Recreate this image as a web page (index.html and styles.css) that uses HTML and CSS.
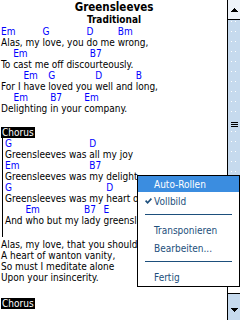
FILE: index.html
```html
<!DOCTYPE html>
<html lang="de">
<head>
<meta charset="utf-8">
<title>Greensleeves</title>
<link rel="stylesheet" href="styles.css">
</head>
<body>
<div class="screen">
  <main class="content">
    <header class="head">
      <h1 class="title">Greensleeves</h1>
      <p class="sub">Traditional</p>
    </header>

    <section class="verse">
      <div class="l"><span class="s"><i>Em</i>Alas, my </span><span class="s"><i>G</i>love, you </span><span class="s"><i>D</i>do me </span><span class="s"><i>Bm</i>wrong,</span></div>
      <div class="l"><span class="s"><i></i>To </span><span class="s"><i>Em</i>cast me off disco</span><span class="s"><i>B7</i>urteously.</span></div>
      <div class="l"><span class="s"><i></i>For I </span><span class="s"><i>Em</i>have </span><span class="s"><i>G</i>loved you </span><span class="s"><i>D</i>well and </span><span class="s"><i>B</i>long,</span></div>
      <div class="l"><span class="s"><i></i>De</span><span class="s"><i>Em</i>lighting </span><span class="s"><i>B7</i>in your </span><span class="s"><i>Em</i>company.</span></div>
    </section>

    <section class="chorus gap">
      <div class="label">Chorus</div>
      <div class="cbody">
        <div class="l"><span class="s"><i>G</i>Greensleeves was </span><span class="s"><i>D</i>all my joy</span></div>
        <div class="l"><span class="s"><i>Em</i>Greensleeves was </span><span class="s"><i>B7</i>my delight,</span></div>
        <div class="l"><span class="s"><i>G</i>Greensleeves was my </span><span class="s"><i>D</i>heart of gold,</span></div>
        <div class="l"><span class="s"><i></i>And </span><span class="s"><i>Em</i>who but my l</span><span class="s"><i>B7</i>ady </span><span class="s"><i>E</i>greensleeves.</span></div>
        <div class="t"></div>
      </div>
    </section>

    <section class="verse gap2">
      <div class="t">Alas, my love, that you should own</div>
      <div class="t">A heart of wanton vanity,</div>
      <div class="t">So must I meditate alone</div>
      <div class="t">Upon your insincerity.</div>
    </section>

    <section class="chorus gap3">
      <div class="label">Chorus</div>
    </section>
  </main>

  <aside class="sb">
    <div class="up"><svg width="7" height="4" viewBox="0 0 7 4"><polygon points="0,4 7,4 3.5,0" fill="#000"/></svg></div>
    <div class="thumb">
      <div class="dots"></div>
      <div class="grip"><span></span><span></span><span></span></div>
    </div>
    <div class="track"></div>
    <div class="down"><svg width="7" height="4" viewBox="0 0 7 4"><polygon points="0,0 7,0 3.5,4" fill="#000"/></svg></div>
  </aside>

  <nav class="menu">
    <div class="mi on"><span class="ck"></span>Auto-Rollen</div>
    <div class="mi"><span class="ck"><svg width="7" height="6" viewBox="0 0 7 6"><path d="M0.6 2.6 L2.6 4.8 L6.4 0.6" fill="none" stroke="#1d4f7c" stroke-width="1.6"/></svg></span>Vollbild</div>
    <div class="sep"></div>
    <div class="mi"><span class="ck"></span>Transponieren</div>
    <div class="mi"><span class="ck"></span>Bearbeiten...</div>
    <div class="sep"></div>
    <div class="mi"><span class="ck"></span>Fertig</div>
  </nav>
</div>
</body>
</html>
```

FILE: styles.css
```css
* { margin: 0; padding: 0; box-sizing: border-box; }

html, body { width: 240px; height: 320px; overflow: hidden; background: #fff; }

body {
  font-family: "DejaVu Sans Condensed", "DejaVu Sans", sans-serif;
  font-stretch: condensed;
  font-size: 10px;
  line-height: 11px;
  color: #000;
}

.screen {
  position: relative;
  display: flex;
  width: 240px;
  height: 320px;
  overflow: hidden;
}

.content {
  flex: none;
  width: 227px;
  height: 320px;
  overflow: hidden;
  padding-left: 1px;
  white-space: nowrap;
}

.head { height: 26px; }

.title {
  font-size: 11.5px;
  font-weight: bold;
  line-height: 14px;
  text-align: center;
}

.sub {
  font-size: 10px;
  font-weight: bold;
  line-height: 12px;
  text-align: center;
}

.gap { margin-top: 13px; }
.gap2 { margin-top: 2px; }
.gap3 { margin-top: 15px; }

.l { display: flex; height: 22px; }
.s { display: flex; flex-direction: column; white-space: pre; }
.s i {
  display: block;
  height: 11px;
  font-style: normal;
  color: #0000ff;
}
.t { height: 11px; white-space: pre; }

.label {
  width: fit-content;
  height: 11px;
  padding: 0 1px;
  background: #000;
  color: #fff;
}

.cbody {
  margin-left: 1px;
  border-left: 1px solid #000;
  padding-left: 2px;
}

/* scrollbar */
.sb {
  flex: none;
  width: 13px;
  height: 320px;
  border-left: 1px solid #000;
  display: flex;
  flex-direction: column;
  background: #fff;
}

.up {
  height: 20px;
  border-bottom: 1px solid #000;
  background: #eef3f9;
  display: flex;
  align-items: center;
  justify-content: center;
}

.thumb {
  height: 210px;
  background: #c6daee;
  border-bottom: 1px solid #000;
  display: grid;
}

.dots, .grip { grid-area: 1 / 1; }

.dots {
  width: 5px;
  margin-left: 3px;
  background-image:
    linear-gradient(#c6daee 9px, transparent 9px),
    linear-gradient(to right, #fff 1px, transparent 1px);
  background-size: 4px 10px, 4px 10px;
  background-position: 0 -8px, 0 0;
}

.grip {
  align-self: center;
  justify-self: center;
  display: flex;
  flex-direction: column;
  gap: 1px;
  background: #c6daee;
  padding: 1px 0;
}
.grip span { display: block; width: 7px; height: 1px; background: #000; }

.track { flex: 1; background: #fff; }

.down {
  height: 27px;
  flex: none;
  border-top: 1px solid #000;
  background: #c6daee;
  display: flex;
  justify-content: center;
  padding-top: 14px;
}

svg { display: block; shape-rendering: crispEdges; }
.ck svg { shape-rendering: auto; }

/* popup menu */
.menu {
  position: absolute;
  left: 137px;
  top: 175px;
  width: 103px;
  height: 112px;
  border: 1px solid #000;
  background: #fff;
  color: #1d4f7c;
  display: flex;
  flex-direction: column;
}

.mi {
  height: 18px;
  display: flex;
  align-items: center;
  padding-left: 7px;
}
.mi.on { height: 16px; background: #3b8de0; color: #fff; }

.ck { width: 9px; flex: none; display: flex; align-items: center; }

.sep {
  height: 1px;
  flex: none;
  background: #1d4f7c;
  margin: 4px 7px 6px 7px;
}
```
